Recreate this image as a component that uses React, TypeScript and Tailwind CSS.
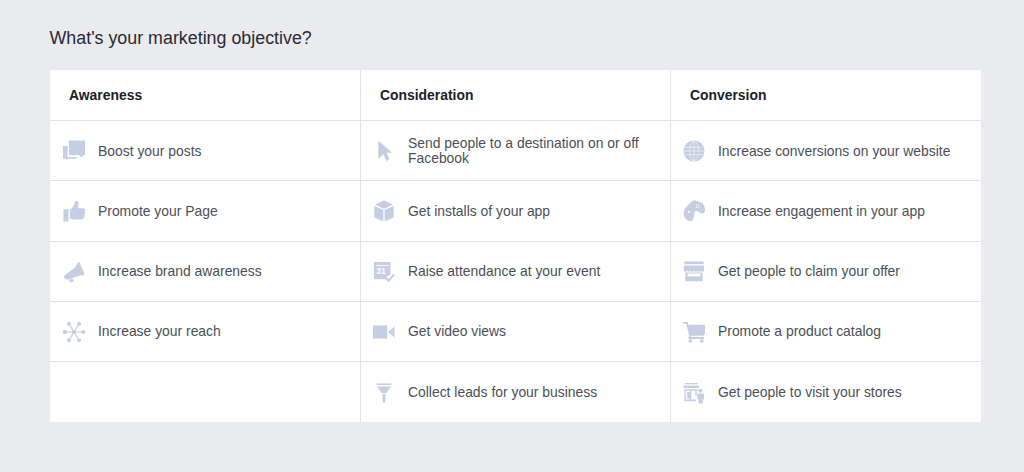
const ink = '#c5cee2'

function Boost() {
  return (
    <svg viewBox="0 0 24 24" className="h-full w-full" fill={ink}>
      <path d="M6.500.5H24v16h-1.500L20 19l-2-2.500H6.500z" />
      <path d="M0 6.500h5v12h11l-2 2H5.500L3.500 23v-2.500H0z" />
    </svg>
  )
}

function Thumb() {
  return (
    <svg viewBox="0 0 24 24" className="h-full w-full" fill={ink}>
      <rect x="0.500" y="10" width="5.500" height="13.500" rx="0.500" />
      <path d="M7.500 22V11c2-1.500 4-4 5-7 .4-1.500.7-3 2-3 1.600 0 2.500 1.500 2.500 3.500 0 1.500-.6 3-1 4.500h6c1.500 0 2.500.8 2.500 2 0 .8-.4 1.400-1 1.800.6.400.9 1 .8 1.700-.1.700-.5 1.200-1.100 1.500.4.500.5 1.100.3 1.700-.2.600-.6 1-1.200 1.200.2.500.2 1-.1 1.500-.4.600-1 .900-1.800.900H11c-1.500 0-2.500-.300-3.500-1z" />
    </svg>
  )
}

function Megaphone() {
  return (
    <svg viewBox="0 0 24 24" className="h-full w-full" fill={ink}>
      <path d="M16.700 1l1.300.500 5.500 12.500-1 1.500h-3L5 20.500 1.500 19l-.7-2.500L13 7z" />
      <path d="M6 20.800l4.500-1.500 1.500 2.700-3.500 1.500z" />
    </svg>
  )
}

function Reach() {
  return (
    <svg viewBox="0 0 24 24" className="h-full w-full" fill={ink} stroke={ink} strokeWidth="1.300">
      <path d="M12 12L6.500 3M12 12l5.500-9M12 12H2M12 12h10M12 12l-5.500 9M12 12l5.500 9" fill="none" />
      <circle cx="6.500" cy="3" r="1.500" />
      <circle cx="17.500" cy="3" r="1.500" />
      <circle cx="2" cy="12" r="1.500" />
      <circle cx="22" cy="12" r="1.500" />
      <circle cx="6.500" cy="21" r="1.500" />
      <circle cx="17.500" cy="21" r="1.500" />
      <circle cx="12" cy="12" r="1.500" />
    </svg>
  )
}

function Cursor() {
  return (
    <svg viewBox="0 0 24 24" className="h-full w-full" fill={ink}>
      <path d="M5.800.7L21 14h-6l3 7-3.500 2-3-7.500-5.700 5.200z" />
    </svg>
  )
}

function Cube() {
  return (
    <svg viewBox="0 0 24 24" className="h-full w-full" fill={ink}>
      <path d="M12 .5l9.800 4.500L12 9.500 2.200 5z" />
      <path d="M1.500 6.500l9.800 4.500v12.500L1.500 19z" />
      <path d="M22.500 6.500L12.700 11v12.500L22.500 19z" />
    </svg>
  )
}

function Calendar() {
  return (
    <svg viewBox="0 0 24 24" className="h-full w-full" fill={ink}>
      <path d="M1 1h18v14l-4 2-1 3H1z" />
      <rect x="3" y="4.500" width="14" height="1" fill="#fff" />
      <text x="3.500" y="14.500" fontSize="9.500" fontWeight="700" fill="#fff" stroke="none" fontFamily="'Liberation Sans',Arial,sans-serif">31</text>
      <path d="M12.500 17l4.500 4.500 6-7" fill="none" stroke={ink} strokeWidth="2.200" />
    </svg>
  )
}

function Video() {
  return (
    <svg viewBox="0 0 24 24" className="h-full w-full" fill={ink}>
      <rect x="0" y="5" width="15.500" height="14" rx="0.500" />
      <path d="M17 11.500l6.500-5.500v12l-6.500-5.500z" />
    </svg>
  )
}

function Funnel() {
  return (
    <svg viewBox="0 0 24 24" className="h-full w-full" fill={ink}>
      <rect x="4" y="1.500" width="16" height="1.800" />
      <path d="M4.500 5h15l-5 7H9.500z" />
      <path d="M10.500 13h3v9.500h-3z" />
    </svg>
  )
}

function Globe() {
  return (
    <svg viewBox="0 0 24 24" className="h-full w-full" fill={ink}>
      <circle cx="12" cy="12" r="11.500" />
      <g fill="none" stroke="#fff" strokeWidth="0.600">
        <ellipse cx="12" cy="12" rx="5" ry="10.500" />
        <path d="M12 1.500v21M2.500 8h19M1 12h22M2.500 16h19" />
      </g>
    </svg>
  )
}

function Gamepad() {
  return (
    <svg viewBox="0 0 24 24" className="h-full w-full" fill={ink}>
      <path d="M7.600 3.600C9.500 1.500 11 .3 13 .3L20 3c2.500 1 4 4.500 4 7.500 0 2.500-1.500 4.500-3.500 4.300-2-.3-3.500-2.300-6-2.800-1.500 0-2 1.500-2.200 3.500-.3 3-.8 5.500-2.300 7-1.500 1.500-5.500.3-7-1.700C.8 18 .3 15 1 12.500 2 9 5 6 7.600 3.600z" />
      <rect x="5.500" y="12" width="2" height="2" fill="#fff" />
      <rect x="14" y="5" width="1.300" height="1.300" fill="#fff" />
      <rect x="16.500" y="5" width="1.300" height="1.300" fill="#fff" />
      <rect x="14" y="7.500" width="1.300" height="1.300" fill="#fff" />
      <rect x="16.500" y="7.500" width="1.300" height="1.300" fill="#fff" />
    </svg>
  )
}

function Storefront() {
  return (
    <svg viewBox="0 0 24 24" className="h-full w-full" fill={ink}>
      <rect x="1.500" y="0.500" width="21" height="3" />
      <path d="M1 5h22v5a1.800 1.800 0 0 1-3.600 0 1.800 1.800 0 0 1-3.700 0 1.800 1.800 0 0 1-3.700 0 1.800 1.800 0 0 1-3.700 0 1.800 1.800 0 0 1-3.700 0A1.800 1.800 0 0 1 1 10z" />
      <path d="M2.500 12.500h19V22h-19zM5 13.500v3.500h14v-3.500z" fillRule="evenodd" />
    </svg>
  )
}

function Cart() {
  return (
    <svg viewBox="0 0 24 24" className="h-full w-full" fill={ink}>
      <path d="M0 1h5l1 3h18v10l-2 2H9l-.6 1.500H23V19.500H5.500l1.200-3.500L3.500 3H0z" />
      <circle cx="8" cy="21.800" r="2" />
      <circle cx="20.500" cy="21.800" r="2" />
    </svg>
  )
}

function Stores() {
  return (
    <svg viewBox="0 0 24 24" className="h-full w-full" fill={ink}>
      <rect x="2" y="1" width="14" height="1.500" />
      <rect x="0.500" y="4" width="17" height="2.500" />
      <path d="M1.500 8h15v1.500h-1.500v5.500h-1.500V9.500H9V19h5v2H1.500zM3 9.500V19h4.500v-1H4.500v-7H7.500V9.500z" fillRule="evenodd" />
      <circle cx="19" cy="9.500" r="2.200" />
      <path d="M15.500 12.500h7.500v6.500h-1.500v4.500h-4.500V19h-1.500z" />
    </svg>
  )
}

const columns = [
  {
    title: 'Awareness',
    items: [
      { label: 'Boost your posts', icon: <Boost /> },
      { label: 'Promote your Page', icon: <Thumb /> },
      { label: 'Increase brand awareness', icon: <Megaphone /> },
      { label: 'Increase your reach', icon: <Reach /> },
    ],
  },
  {
    title: 'Consideration',
    items: [
      { label: 'Send people to a destination on or off Facebook', icon: <Cursor /> },
      { label: 'Get installs of your app', icon: <Cube /> },
      { label: 'Raise attendance at your event', icon: <Calendar /> },
      { label: 'Get video views', icon: <Video /> },
      { label: 'Collect leads for your business', icon: <Funnel /> },
    ],
  },
  {
    title: 'Conversion',
    items: [
      { label: 'Increase conversions on your website', icon: <Globe /> },
      { label: 'Increase engagement in your app', icon: <Gamepad /> },
      { label: 'Get people to claim your offer', icon: <Storefront /> },
      { label: 'Promote a product catalog', icon: <Cart /> },
      { label: 'Get people to visit your stores', icon: <Stores /> },
    ],
  },
]

export default function App() {
  return (
    <div className="h-[472px] w-[1024px] overflow-hidden bg-[#e9ebee] pl-[49.500px] pt-[26px] font-['Liberation_Sans',Arial,sans-serif]">
      <h1 className="text-[17.850px] leading-[24px] text-[#2a2a33]">What's your marketing objective?</h1>
      <div className="mt-[20px] grid w-[931.500px] grid-cols-[311.500px_310px_310px] bg-white">
        {columns.map((col, i) => (
          <div key={col.title} className={i < 2 ? 'border-r border-[#e2e3e7]' : ''}>
            <div className={`flex h-[51px] items-center border-b border-[#e2e3e7] pt-px text-[13.900px] font-bold text-[#1d2129] ${i === 0 ? 'pl-[19.500px]' : 'pl-[19px]'}`}>
              {col.title}
            </div>
            {[0, 1, 2, 3, 4].map((n) => {
              const item = col.items[n]
              return (
                <div
                  key={n}
                  className={`flex h-[60.250px] items-center gap-[13px] pr-[20px] pt-px ${i === 0 ? 'pl-[13.500px]' : 'pl-[12px]'} ${n < 4 ? 'border-b border-[#e2e3e7]' : ''}`}
                >
                  {item && (
                    <>
                      <span className="h-[22px] w-[22px] shrink-0">{item.icon}</span>
                      <span className="text-[13.900px] leading-[15px] text-[#4b4f56]">{item.label}</span>
                    </>
                  )}
                </div>
              )
            })}
          </div>
        ))}
      </div>
    </div>
  )
}
